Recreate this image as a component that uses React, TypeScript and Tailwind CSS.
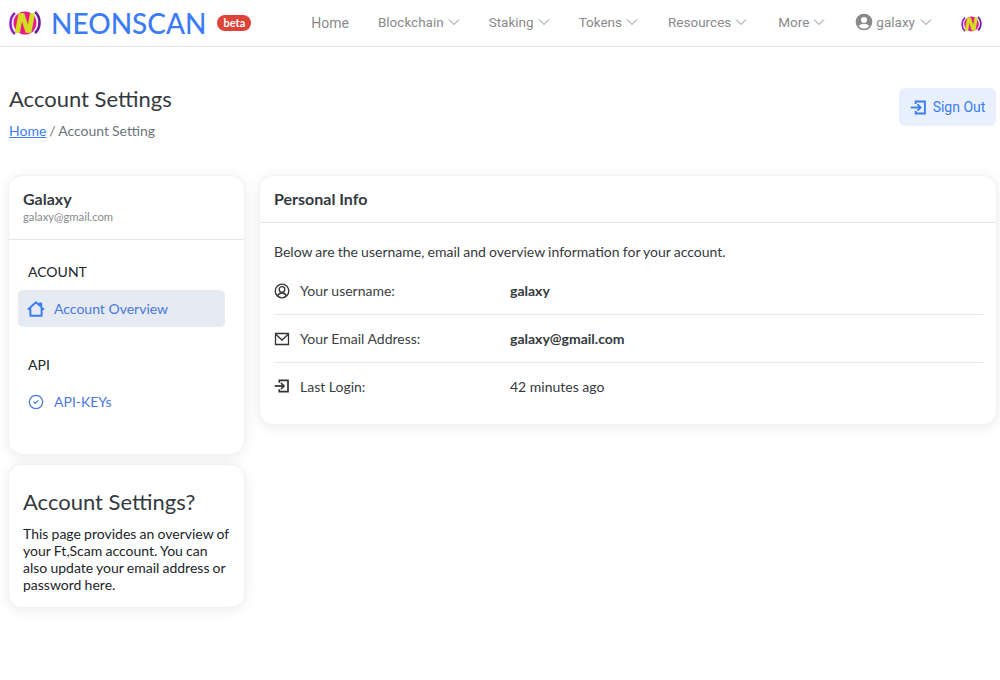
import {CircleCheck} from 'lucide-react';

function Logo({className}: {className: string}) {
    return (
        <svg viewBox="0 0 32 28" className={className}>
            <path d="M6 4C0 9 0 20 6 25" fill="none" stroke="#8e24c8" strokeWidth="2.600"/>
            <path d="M26 3C32 8 32 19 26 24" fill="none" stroke="#6a1b9a" strokeWidth="2.600"/>
            <ellipse cx="16" cy="14" rx="11.500" ry="11.500" fill="#ec1a86"/>
            <text x="15.500" y="23" textAnchor="middle" fontSize="25" fontWeight="900" fontStyle="italic" fontFamily="'Liberation Sans', sans-serif" fill="#d4e01f" stroke="#d4e01f" strokeWidth="1.500">N</text>
        </svg>
    );
}

function Chevron() {
    return (
        <svg viewBox="0 0 12 12" className="w-[12px] h-[12px]" fill="none" stroke="#8a8a8a" strokeWidth="1">
            <path d="M1 3.500 6 8.500 11 3.500"/>
        </svg>
    );
}

function LoginIcon({className}: {className: string}) {
    return (
        <svg viewBox="0 0 24 24" className={className} fill="none" stroke="currentColor" strokeWidth="2.600">
            <path d="M8 7V3.500h13v17H8V17"/>
            <path d="M1 12h13"/>
            <path d="M10.500 7.500 15 12l-4.500 4.500"/>
        </svg>
    );
}

function NavItem({label, className = ''}: {label: string; className?: string}) {
    return (
        <div className={`flex items-center gap-[4px] ${className}`}>
            <span>{label}</span>
            <Chevron/>
        </div>
    );
}

function InfoRow({icon, label, value, bold, last}: {icon: React.ReactNode; label: string; value: string; bold?: boolean; last?: boolean}) {
    return (
        <div className={`flex items-center ${last ? 'h-[46px]' : 'h-12 border-b border-[#e8e8e8]'}`}>
            <div className="w-[26px] flex items-center text-[#333]">{icon}</div>
            <div className="w-[210px] text-[#3a3f44]">{label}</div>
            <div className={bold ? 'font-bold text-[#343a40]' : 'text-[#343a40]'}>{value}</div>
        </div>
    );
}

export default function App() {
    return (
        <div className="w-[1000px] h-[680px] bg-white overflow-hidden font-['Lato',sans-serif] text-[14px]">
            <header className="h-[47px] flex items-center border-b border-[#e6e6e6] pl-[9px] pr-[18px]">
                <Logo className="w-[32px] h-[28px]"/>
                <span className="ml-[10px] text-[#3b7cf5] text-[28px] font-medium leading-none">NEONSCAN</span>
                <span className="ml-[11px] px-[6px] h-[16px] rounded-full bg-[#dc4437] text-white text-[11px] font-bold leading-[15px]">beta</span>
                <nav className="ml-auto -mt-[2px] flex items-center gap-[30px] font-['Roboto',sans-serif] text-[13.500px] text-[#8a8a8a]">
                    <span className="text-[14px] mt-[2px] -mr-[1px]">Home</span>
                    <NavItem label="Blockchain" className="-mr-[1px]"/>
                    <NavItem label="Staking" className="-mr-[1px]"/>
                    <NavItem label="Tokens"/>
                    <NavItem label="Resources" className="mr-[1px]"/>
                    <NavItem label="More"/>
                    <div className="flex items-center gap-[4px] ml-[1px]">
                        <svg viewBox="0 0 24 24" className="w-[20px] h-[20px] -m-[2px]" fill="#8a8a8a">
                            <path d="M12 2a10 10 0 1 0 0 20 10 10 0 0 0 0-20zm0 4a3.600 3.600 0 1 1 0 7.200A3.600 3.600 0 0 1 12 6zm0 14a8 8 0 0 1-6.200-3c.5-1.800 3.400-2.900 6.200-2.900s5.700 1.100 6.200 2.900A8 8 0 0 1 12 20z"/>
                        </svg>
                        <span>galaxy</span>
                        <span className="ml-[1px]"><Chevron/></span>
                    </div>
                    <Logo className="w-[21px] h-[18px] mt-[4px] -ml-[1px]"/>
                </nav>
            </header>

            <main className="pl-[9px] pr-[3px]">
                <div className="flex justify-between pt-[41px] h-[128px]">
                    <div>
                        <h1 className="-mt-[1px] text-[22px] leading-[24px] text-[#343a40]">Account Settings</h1>
                        <div className="mt-[10px] text-[#6c757d] leading-[20px] [word-spacing:-0.600px]">
                            <a className="text-[#3b7cf5] underline">Home</a> / Account Setting
                        </div>
                    </div>
                    <button className="h-[38px] w-[97px] mr-[1px] rounded-[6px] bg-[#e9f0fd] text-[#3b7cf5] font-['Roboto',sans-serif] flex items-center justify-center gap-[6px]">
                        <LoginIcon className="w-[17px] h-[17px]"/>
                        Sign Out
                    </button>
                </div>

                <div className="flex gap-[14px] items-start -ml-[1px]">
                    <div className="w-[237px] flex flex-col gap-[9px]">
                        <section className="h-[280px] rounded-[14px] bg-white border border-[#f2f2f2] shadow-[0_2px_14px_rgba(0,0,0,0.08)]">
                            <div className="h-[64px] px-[14px] pt-[13px] border-b border-[#e6e6e6]">
                                <div className="text-[16px] font-bold text-[#343a40] leading-[20px]">Galaxy</div>
                                <div className="text-[11.250px] text-[#85898d] leading-[16px]">galaxy@gmail.com</div>
                            </div>
                            <div className="pl-[9px] pr-[19px]">
                                <div className="pl-[10px] pt-[23px] h-[50px] text-[#212529] leading-[18px]">ACOUNT</div>
                                <div className="h-[37px] rounded-[5px] bg-[#e6eaf2] flex items-center pl-[9px] gap-[9px] text-[#4a78e0]">
                                    <svg viewBox="0 0 24 24" className="w-[18px] h-[18px]" fill="none" stroke="#3b7cf5" strokeWidth="2.600" strokeLinejoin="round">
                                        <path d="M2 12 12 3l5 4.500V4.500h2V10l3 2h-2.500v9H4.500v-9z"/>
                                    </svg>
                                    Account Overview
                                </div>
                                <div className="pl-[10px] pt-[29px] h-[56px] text-[#212529] leading-[18px]">API</div>
                                <div className="h-[37px] flex items-center pl-[10px] gap-[10px] text-[#4a78e0]">
                                    <CircleCheck className="w-[16px] h-[16px]" strokeWidth={1.800}/>
                                    API-KEYs
                                </div>
                            </div>
                        </section>
                        <section className="h-[144px] rounded-[14px] bg-white border border-[#f2f2f2] shadow-[0_2px_14px_rgba(0,0,0,0.08)] pl-[14px] pr-[12px] pt-[24px]">
                            <h2 className="text-[22px] leading-[26px] text-[#343a40]">Account Settings?</h2>
                            <p className="mt-[10px] text-[#212529] leading-[17px] [word-spacing:-0.400px]">This page provides an overview of your Ft,Scam account. You can also update your email address or password here.</p>
                        </section>
                    </div>

                    <section className="flex-1 h-[250px] rounded-[14px] bg-white border border-[#f2f2f2] shadow-[0_2px_14px_rgba(0,0,0,0.08)]">
                        <div className="h-[47px] px-[14px] flex items-center border-b border-[#e6e6e6] text-[16px] font-bold text-[#343a40]">Personal Info</div>
                        <div className="pl-[14px] pr-[13px] pt-[19px]">
                            <p className="text-[#343a40] leading-[20px] mb-[5px] [word-spacing:-0.400px]">Below are the username, email and overview information for your account.</p>
                            <InfoRow
                                icon={
                                    <svg viewBox="0 0 16 16" className="w-[16px] h-[16px]" fill="none" stroke="currentColor" strokeWidth="1.300">
                                        <circle cx="8" cy="8" r="6.800"/>
                                        <circle cx="8" cy="6.500" r="2.800"/>
                                        <path d="M3.500 13c.8-2 2.500-3 4.500-3s3.700 1 4.500 3"/>
                                    </svg>
                                }
                                label="Your username:"
                                value="galaxy"
                                bold
                            />
                            <InfoRow
                                icon={
                                    <svg viewBox="0 0 16 16" className="w-[16px] h-[16px]" fill="none" stroke="currentColor" strokeWidth="1.300">
                                        <path d="M1.500 2.500h13v11h-13z"/>
                                        <path d="M1.500 3 8 9l6.500-6"/>
                                    </svg>
                                }
                                label="Your Email Address:"
                                value="galaxy@gmail.com"
                                bold
                            />
                            <InfoRow icon={<LoginIcon className="w-[16px] h-[16px]"/>} label="Last Login:" value="42 minutes ago" last/>
                        </div>
                    </section>
                </div>
            </main>
        </div>
    );
}
